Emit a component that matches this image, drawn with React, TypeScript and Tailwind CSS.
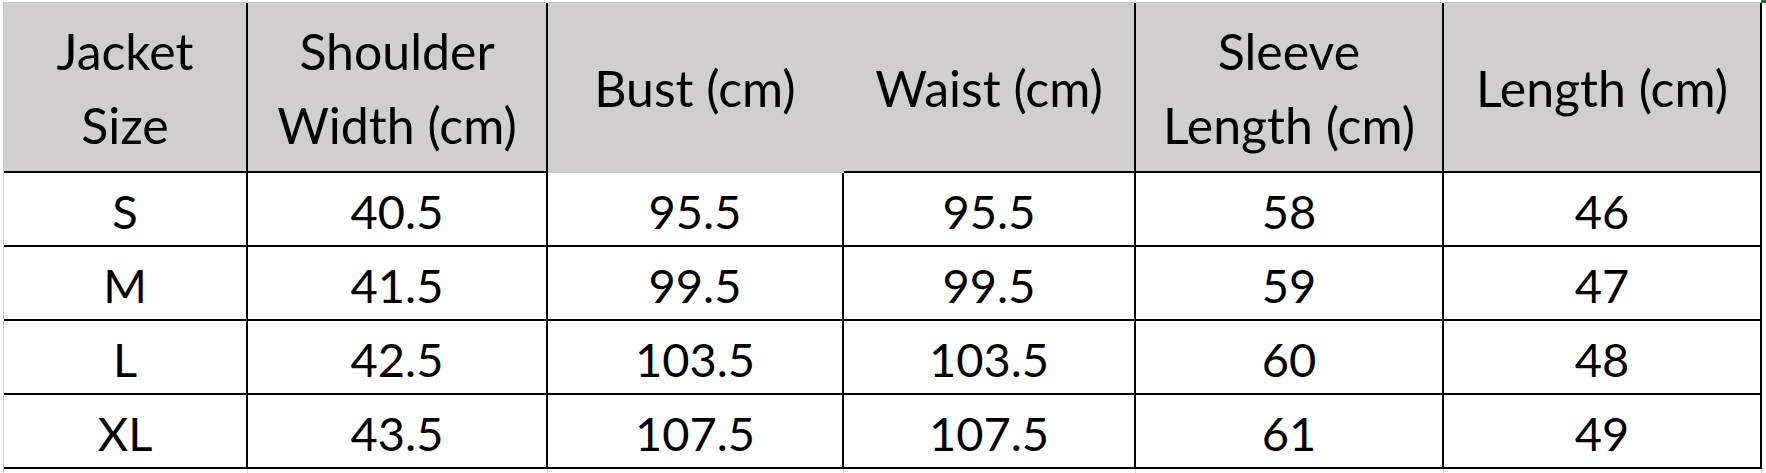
import React from "react";

const headers: { lines: string[] }[] = [
  { lines: ["Jacket", "Size"] },
  { lines: ["Shoulder", "Width (cm)"] },
  { lines: ["Bust (cm)"] },
  { lines: ["Waist (cm)"] },
  { lines: ["Sleeve", "Length (cm)"] },
  { lines: ["Length (cm)"] },
];

const rows: string[][] = [
  ["S", "40.5", "95.5", "95.5", "58", "46"],
  ["M", "41.5", "99.5", "99.5", "59", "47"],
  ["L", "42.5", "103.5", "103.5", "60", "48"],
  ["XL", "43.5", "107.5", "107.5", "61", "49"],
];

export default function App() {
  return (
    <div className="w-[1766px] h-[473px] overflow-hidden bg-white relative">
      <div
        className="mt-[2px] ml-[3px] border-t border-l border-[#c8c8c8] h-[471px]"
        style={{ fontFamily: "Lato, 'Open Sans', sans-serif" }}
      >
        <div className="grid grid-cols-[244px_300px_296px_292px_308px_318px] text-black">
          {headers.map((h, i) => (
            <div
              key={"h" + i}
              className={
                i === 2
                  ? "h-[170px] bg-[#d0cece] border-r-2 border-b-2 border-[#d0cece] flex flex-col items-center justify-center text-[50px] leading-[74px] pt-[2px]"
                  : "h-[170px] bg-[#d0cece] border-r-2 border-b-2 border-black flex flex-col items-center justify-center text-[50px] leading-[74px] pt-[2px]"
              }
            >
              {h.lines.map((l) => (
                <span key={l} className="whitespace-nowrap">
                  {l}
                </span>
              ))}
            </div>
          ))}
          {rows.map((r, ri) =>
            r.map((c, ci) => (
              <div
                key={ri + "-" + ci}
                className="h-[74px] border-r-2 border-b-2 border-black flex items-center justify-center text-[47px] leading-none pt-[4px]"
              >
                {c}
              </div>
            ))
          )}
          {[0, 1, 2, 3, 4, 5].map((i) => (
            <div key={"g" + i} className="h-[10px] border-r border-[#d4d4d4]" />
          ))}
        </div>
      </div>
      <div className="absolute top-0 left-[1761px] w-[5px] h-[3px] bg-[#217346]" />
    </div>
  );
}
